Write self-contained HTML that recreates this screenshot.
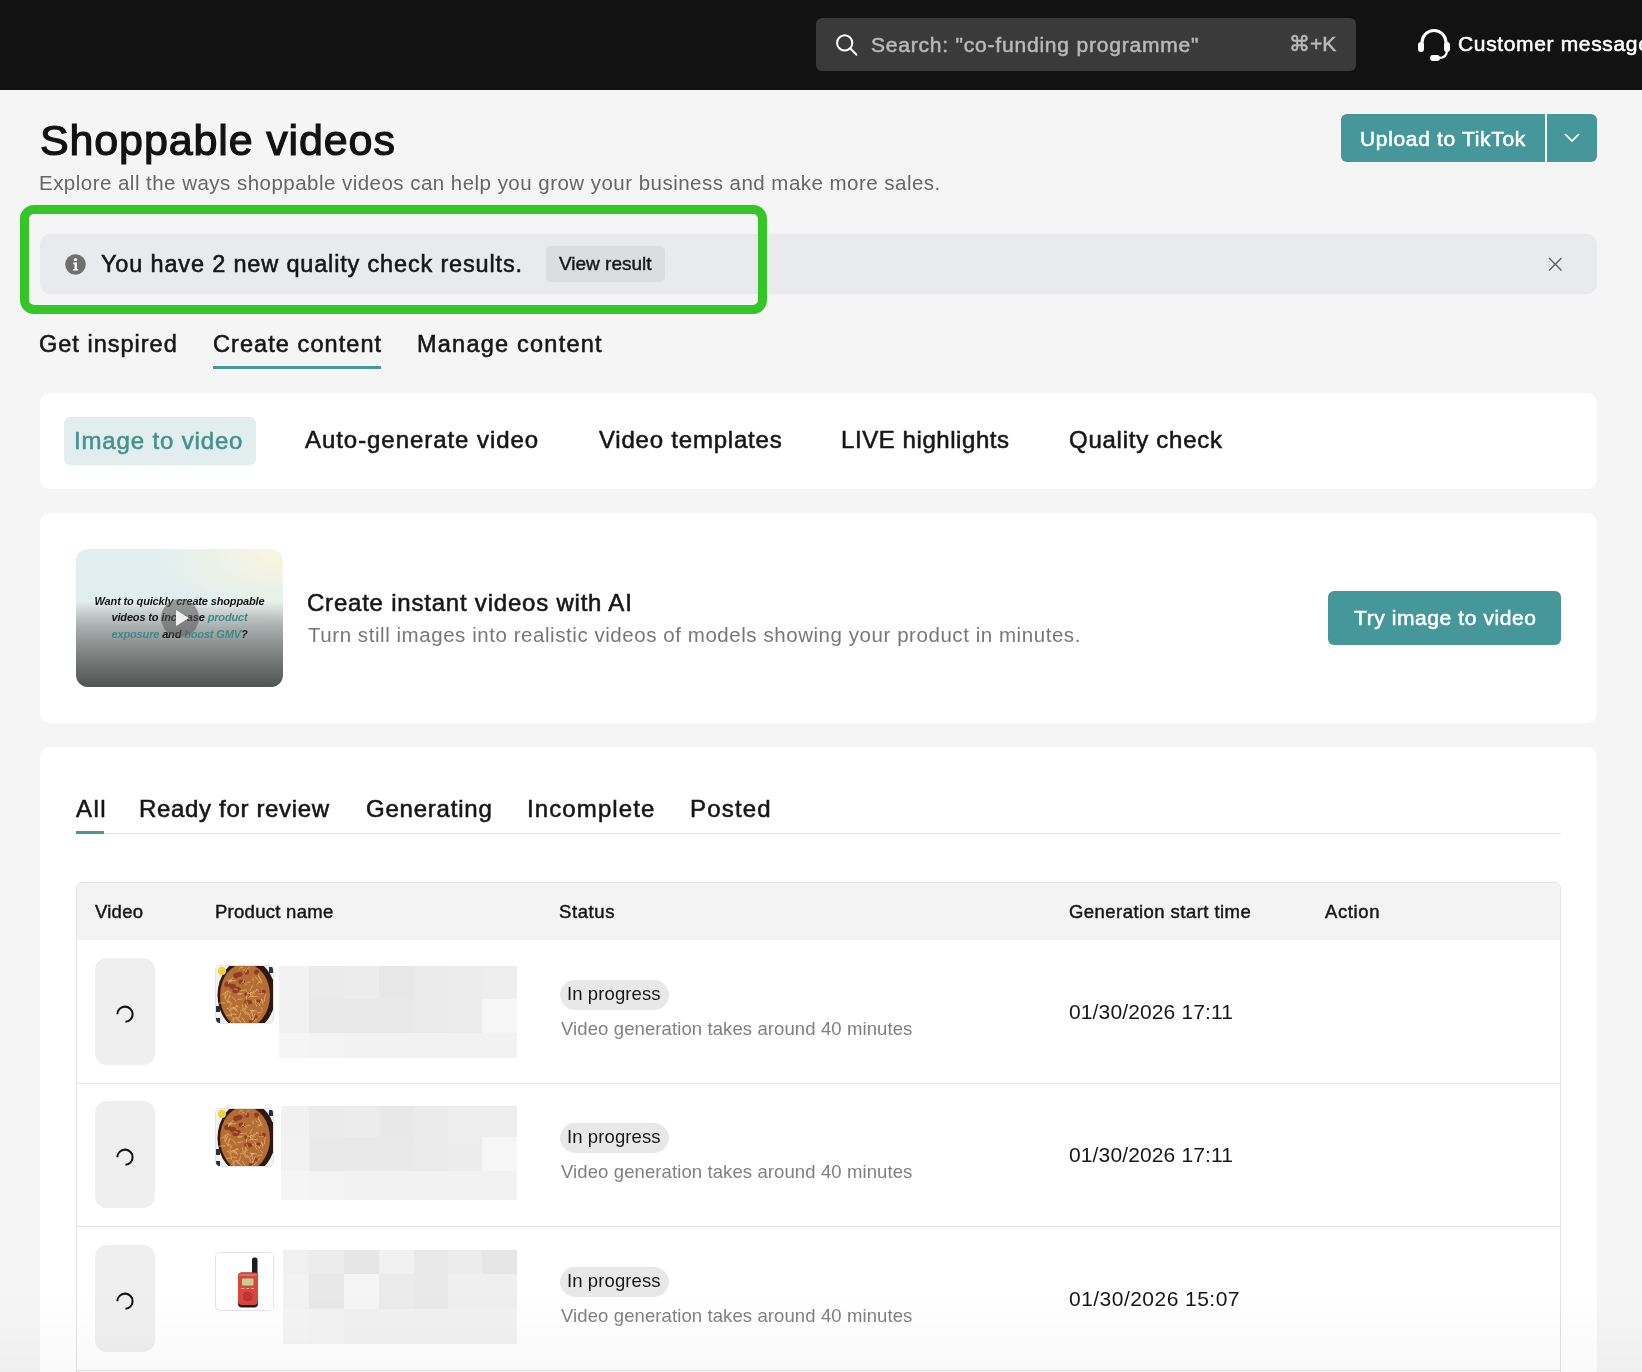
<!DOCTYPE html>
<html><head><meta charset="utf-8">
<style>
*{box-sizing:border-box;margin:0;padding:0}
html,body{width:1642px;height:1372px;overflow:hidden}
body{background:#f5f5f5;font-family:"Liberation Sans",sans-serif;color:#161616;position:relative}
.abs{position:absolute}
.t{position:absolute;white-space:nowrap;line-height:1;will-change:transform}
.card{position:absolute;background:#fff;border-radius:10px}
.teal{background:#45979a}
.spinbox{position:absolute;left:95px;width:60px;height:107px;background:#efeff0;border-radius:12px}
.pimg{position:absolute;left:215px;width:59px;height:59px;border-radius:5px;border:1px solid #e4e4e4;overflow:hidden;background:#fff}
.blk{position:absolute;display:grid;grid-template-columns:repeat(7,1fr);grid-template-rows:34px 34px 25px}
.blk i{display:block}
.chip{position:absolute;left:560px;width:109px;height:30px;border-radius:15px;background:#e8e8e8}
</style></head><body>

<div class="abs" style="left:0;top:0;width:1642px;height:90px;background:#121212"></div>
<div class="abs" style="left:816px;top:18px;width:540px;height:53px;background:#3a3a3a;border-radius:6px"></div>
<svg class="abs" style="left:830px;top:28px" width="32" height="32" viewBox="0 0 32 32"><circle cx="14.7" cy="14.9" r="7.6" fill="none" stroke="#fff" stroke-width="2"/><line x1="20.3" y1="20.5" x2="26.5" y2="26.7" stroke="#fff" stroke-width="2" stroke-linecap="round"/></svg>
<svg class="abs" style="left:1414px;top:25px" width="40" height="40" viewBox="0 0 40 40"><path d="M8 20 V17.5 A12 12 0 0 1 32 17.5 V20" fill="none" stroke="#fff" stroke-width="3.1"/><rect x="4" y="17" width="6" height="10" rx="3" fill="#fff"/><rect x="30" y="17" width="6" height="10" rx="3" fill="#fff"/><path d="M33 25 Q33 33 25 33" fill="none" stroke="#fff" stroke-width="2.2"/><rect x="16" y="30" width="10" height="6" rx="3" fill="#fff"/></svg>
<div class="abs teal" style="left:1341px;top:114px;width:256px;height:48px;border-radius:6px"></div>
<div class="abs" style="left:1545px;top:114px;width:2px;height:48px;background:#f5f5f5"></div>
<svg class="abs" style="left:1563px;top:131px" width="18" height="13" viewBox="0 0 18 13"><path d="M2 3 L9 10 L16 3" fill="none" stroke="#fff" stroke-width="1.7"/></svg>
<div class="abs" style="left:40px;top:234px;width:1557px;height:60px;background:#e9eaed;border-radius:10px"></div>
<div class="abs" style="left:20.2px;top:205px;width:746.6px;height:108.5px;border:9.5px solid #34c527;border-radius:14px"></div>
<svg class="abs" style="left:65px;top:254px" width="21" height="21" viewBox="0 0 21 21"><circle cx="10.5" cy="10.5" r="10.3" fill="#6f6f6f"/><circle cx="10.5" cy="5.6" r="1.7" fill="#fff"/><path d="M8.3 8.6 H11.9 V14.9 H13.2 V16.6 H8.1 V14.9 H9.5 V10.3 H8.3 Z" fill="#fff"/></svg>
<div class="abs" style="left:546px;top:246px;width:119px;height:36px;background:#dcdde1;border-radius:5px"></div>
<svg class="abs" style="left:1546px;top:255px" width="18" height="18" viewBox="0 0 18 18"><path d="M3 3 L15.5 15.5 M15.5 3 L3 15.5" stroke="#5c5c5c" stroke-width="1.4"/></svg>
<div class="abs" style="left:213px;top:366px;width:168px;height:3px;background:#45979a"></div>
<div class="card" style="left:40px;top:393px;width:1557px;height:96px"></div>
<div class="abs" style="left:64px;top:417px;width:192px;height:48px;background:#e2eded;border-radius:6px"></div>
<div class="card" style="left:40px;top:513px;width:1557px;height:210px"></div>
<div class="abs" style="left:76px;top:549px;width:207px;height:138px;border-radius:12px;overflow:hidden;background:radial-gradient(ellipse 60% 50% at 100% 0%,rgba(252,246,222,.95) 0%,rgba(252,246,222,0) 100%),linear-gradient(180deg,#e2eff0 0%,#e1eeee 38%,#cdd3d2 45%,#aab0af 56%,#8b908f 70%,#6b706f 85%,#505554 100%)">
<div class="t" style="left:0;top:47px;width:207px;text-align:center;font-size:11px;font-weight:bold;font-style:italic;color:#111;letter-spacing:-.15px">Want to quickly create shoppable</div>
<div class="t" style="left:0;top:63px;width:207px;text-align:center;font-size:11px;font-weight:bold;font-style:italic;color:#111;letter-spacing:-.15px">videos to increase <span style="color:#3e8a87">product</span></div>
<div class="t" style="left:0;top:80px;width:207px;text-align:center;font-size:11px;font-weight:bold;font-style:italic;color:#111;letter-spacing:-.15px"><span style="color:#3e8a87">exposure</span> and <span style="color:#3e8a87">boost GMV</span>?</div>
<div class="abs" style="left:85px;top:50px;width:38px;height:38px;border-radius:50%;background:rgba(90,90,90,.55)"></div>
<svg class="abs" style="left:96px;top:59px" width="20" height="20" viewBox="0 0 20 20"><path d="M4 2 L17 10 L4 18 Z" fill="#f0f0f0"/></svg>
</div>
<div class="abs teal" style="left:1328px;top:591px;width:233px;height:54px;border-radius:6px"></div>
<div class="card" style="left:40px;top:747px;width:1557px;height:700px"></div>
<div class="abs" style="left:76px;top:833px;width:1485px;height:1px;background:#e3e3e3"></div>
<div class="abs" style="left:76px;top:831px;width:28px;height:3px;background:#45979a"></div>
<div class="abs" style="left:76px;top:882px;width:1485px;height:600px;border:1px solid #e3e3e3;border-radius:6px"></div>
<div class="abs" style="left:77px;top:883px;width:1483px;height:57px;background:#f3f3f4;border-radius:5px 5px 0 0"></div>
<div class="abs" style="left:77px;top:1083px;width:1483px;height:1px;background:#e3e3e3"></div>
<div class="spinbox" style="top:958px"></div>
<svg class="abs" style="left:113px;top:1002px" width="24" height="24" viewBox="0 0 24 24"><path d="M4.4 12.2 A7.6 7.6 0 1 1 12.4 19.8" fill="none" stroke="#161616" stroke-width="2.1"/></svg>
<div class="pimg" style="top:965px"><svg width="58" height="58" viewBox="0 0 58 58"><rect width="58" height="58" fill="#f2f2f2"/><g fill="#1f3446"><rect x="53" y="1" width="5" height="6"/><rect x="54" y="13" width="4" height="7"/><rect x="0" y="40" width="4" height="6"/><rect x="0" y="52" width="4" height="6"/></g><ellipse cx="30.5" cy="29" rx="29" ry="36" fill="#2e190c"/><ellipse cx="29" cy="29.5" rx="25" ry="32" fill="#b56d36"/><g fill="#8a3420" opacity=".85"><ellipse cx="32.9" cy="36.2" rx="3.3" ry="2.2"/><ellipse cx="19.4" cy="25.0" rx="3.1" ry="2.1"/><ellipse cx="30.7" cy="5.9" rx="2.3" ry="2.7"/><ellipse cx="31.1" cy="36.1" rx="2.7" ry="2.5"/><ellipse cx="16.8" cy="20.6" rx="3.2" ry="2.8"/><ellipse cx="42.0" cy="35.7" rx="3.3" ry="2.2"/><ellipse cx="25.8" cy="15.9" rx="3.3" ry="2.4"/><ellipse cx="35.5" cy="55.4" rx="2.7" ry="2.5"/><ellipse cx="39.3" cy="51.7" rx="2.8" ry="2.4"/><ellipse cx="31.7" cy="28.2" rx="3.2" ry="2.3"/><ellipse cx="40.6" cy="6.1" rx="2.5" ry="2.7"/><ellipse cx="11.4" cy="18.4" rx="3.2" ry="2.7"/><ellipse cx="19.9" cy="9.7" rx="2.7" ry="2.7"/><ellipse cx="23.4" cy="8.3" rx="3.2" ry="2.6"/><ellipse cx="46.4" cy="25.7" rx="3.3" ry="2.3"/><ellipse cx="21.3" cy="23.6" rx="3.5" ry="2.9"/></g><path d="M26.8 32.5Q24.3 33.4 21.6 33.7M14.5 29.7Q11.5 32.1 11.7 36.1M36.1 35.7Q37.5 34.7 38.8 37.2M14.7 14.0Q17.2 15.7 20.0 14.5M29.9 37.1Q29.7 39.4 29.9 43.4M44.6 41.1Q44.9 41.1 46.9 44.5M41.2 23.2Q40.9 25.8 36.9 25.5M47.9 27.3Q43.7 27.9 42.9 27.6M41.8 15.6Q45.9 17.3 46.3 16.9M11.4 14.3Q14.2 13.5 14.6 15.3M31.7 26.0Q33.0 28.4 37.2 29.7M11.4 24.4Q14.9 27.0 14.8 27.1M20.0 51.3Q23.4 53.4 23.9 54.4M15.8 15.0Q13.2 14.8 12.3 18.0M10.1 33.8Q11.8 35.7 14.5 38.0M50.1 28.1Q48.0 30.2 48.4 35.2M17.5 11.0Q13.6 15.6 12.2 16.6M46.6 35.0Q45.2 38.6 47.4 38.4M17.0 40.9Q19.8 42.6 21.9 46.0M14.1 41.8Q16.3 43.6 18.1 42.7M34.3 16.3Q30.4 15.8 30.4 17.3M26.5 3.5Q28.9 3.3 30.6 6.1M22.7 51.7Q20.3 52.2 16.4 52.1M28.2 42.4Q28.6 45.9 32.5 49.1M39.9 52.2Q38.9 56.3 35.5 57.0M22.2 39.7Q18.4 42.0 15.2 42.0M45.7 33.2Q45.1 35.9 43.8 37.8M9.7 37.1Q6.9 36.7 2.3 37.2M39.8 33.7Q38.8 38.2 41.1 40.8M28.1 13.4Q27.0 17.3 24.9 17.8M19.8 39.3Q23.0 41.1 22.9 41.6M26.3 51.7Q26.8 54.2 29.6 57.1M46.5 22.3Q44.4 24.5 45.3 26.7M44.5 49.2Q41.2 51.0 39.7 55.3M26.7 16.0Q29.2 17.5 30.7 19.1M20.5 48.7Q16.2 46.9 15.3 49.0M38.6 33.1Q38.6 34.5 42.5 38.8M26.9 1.4Q23.7 0.7 23.3 3.6M34.9 25.9Q34.9 30.6 32.5 31.7M37.5 11.6Q35.7 13.4 37.8 15.4M38.9 10.4Q41.2 12.3 42.0 14.0M34.3 43.9Q37.0 45.5 36.5 50.4M12.0 26.3Q10.0 30.1 9.1 33.3M46.4 46.2Q44.4 45.5 41.2 47.1M39.2 47.5Q36.6 52.0 36.4 53.4M30.7 45.9Q34.1 48.4 34.7 52.2M9.8 25.6Q9.2 27.1 8.7 32.3M42.8 10.0Q43.1 11.6 46.2 16.1M29.8 42.0Q28.7 43.5 24.1 45.1M16.2 30.5Q18.8 33.3 20.3 35.8M44.8 32.5Q47.6 36.1 47.5 36.6M15.6 49.3Q13.1 48.4 10.0 49.9M30.7 29.2Q32.0 30.7 29.6 32.2M24.4 46.5Q24.7 47.4 23.4 51.8M30.8 24.0Q26.1 24.4 23.2 25.0M11.8 25.2Q8.6 26.5 5.6 29.3M14.8 35.8Q14.2 34.4 11.3 36.7M14.9 13.2Q13.1 15.6 12.4 17.0M10.8 42.4Q12.4 42.2 16.0 44.5M30.4 25.3Q31.5 26.3 32.3 30.0M15.4 36.6Q15.6 39.6 13.0 41.7M45.4 13.5Q44.6 15.3 40.6 18.6M20.5 53.5Q25.1 54.6 26.7 58.6M17.0 42.1Q19.5 43.1 19.4 44.7M42.3 7.3Q41.4 9.2 44.3 13.4M37.4 52.9Q35.6 54.1 33.8 53.2M29.1 39.8Q28.9 38.9 31.9 41.6M31.4 29.9Q29.7 30.5 30.6 33.5M27.3 44.4Q28.7 46.4 30.0 48.9M33.6 0.8Q30.2 3.5 29.4 6.6M40.0 23.5Q41.6 22.7 43.1 25.7M38.4 49.9Q37.8 52.2 36.4 54.5M17.9 52.9Q16.7 55.0 13.1 57.8M38.0 44.5Q37.0 44.5 34.2 47.9M21.7 27.2Q24.7 27.8 26.5 27.4M36.6 19.6Q35.4 21.7 33.8 24.7M38.3 44.2Q37.2 45.2 35.1 44.4M17.8 23.3Q19.3 22.0 21.7 23.9M17.5 52.5Q19.0 55.5 16.7 58.0M33.5 44.0Q35.9 44.5 41.1 45.1M13.8 28.7Q15.0 30.0 12.7 31.8M30.2 34.7Q31.8 36.9 32.0 38.7M19.0 41.6Q18.9 41.0 20.9 44.0M13.2 43.8Q15.5 45.5 15.7 50.8M25.8 27.7Q23.7 29.6 21.6 28.1M39.2 27.2Q36.1 25.9 32.2 27.6M34.7 26.4Q36.1 25.9 37.3 28.4M26.4 38.7Q27.0 40.6 27.0 43.0M41.8 30.8Q38.8 29.8 34.0 30.8M42.1 36.2Q43.8 38.5 43.9 40.2" fill="none" stroke="#e6b56e" stroke-width=".9" opacity=".85"/><circle cx="6" cy="5" r="4" fill="#efd236"/></svg></div>
<div class="abs" style="left:279px;top:965.5px;width:30.0px;height:33.2px;background:rgb(242,242,243)"></div>
<div class="abs" style="left:309px;top:965.5px;width:35.0px;height:33.2px;background:rgb(235,235,236)"></div>
<div class="abs" style="left:344px;top:965.5px;width:34.5px;height:33.2px;background:rgb(236,236,237)"></div>
<div class="abs" style="left:378.5px;top:965.5px;width:35.0px;height:33.2px;background:rgb(231,231,232)"></div>
<div class="abs" style="left:413.5px;top:965.5px;width:34.5px;height:33.2px;background:rgb(234,234,235)"></div>
<div class="abs" style="left:448px;top:965.5px;width:34.0px;height:33.2px;background:rgb(236,236,237)"></div>
<div class="abs" style="left:482px;top:965.5px;width:35.0px;height:33.2px;background:rgb(238,238,239)"></div>
<div class="abs" style="left:279px;top:998.7px;width:30.0px;height:34.1px;background:rgb(241,241,242)"></div>
<div class="abs" style="left:309px;top:998.7px;width:35.0px;height:34.1px;background:rgb(233,233,234)"></div>
<div class="abs" style="left:344px;top:998.7px;width:34.5px;height:34.1px;background:rgb(233,233,234)"></div>
<div class="abs" style="left:378.5px;top:998.7px;width:35.0px;height:34.1px;background:rgb(233,233,234)"></div>
<div class="abs" style="left:413.5px;top:998.7px;width:34.5px;height:34.1px;background:rgb(234,234,235)"></div>
<div class="abs" style="left:448px;top:998.7px;width:34.0px;height:34.1px;background:rgb(236,236,237)"></div>
<div class="abs" style="left:482px;top:998.7px;width:35.0px;height:34.1px;background:rgb(246,246,247)"></div>
<div class="abs" style="left:279px;top:1032.8px;width:30.0px;height:24.9px;background:rgb(245,245,246)"></div>
<div class="abs" style="left:309px;top:1032.8px;width:35.0px;height:24.9px;background:rgb(243,243,244)"></div>
<div class="abs" style="left:344px;top:1032.8px;width:34.5px;height:24.9px;background:rgb(242,242,243)"></div>
<div class="abs" style="left:378.5px;top:1032.8px;width:35.0px;height:24.9px;background:rgb(242,242,243)"></div>
<div class="abs" style="left:413.5px;top:1032.8px;width:34.5px;height:24.9px;background:rgb(242,242,243)"></div>
<div class="abs" style="left:448px;top:1032.8px;width:34.0px;height:24.9px;background:rgb(242,242,243)"></div>
<div class="abs" style="left:482px;top:1032.8px;width:35.0px;height:24.9px;background:rgb(242,242,243)"></div>
<div class="chip" style="top:980px"></div>
<div class="abs" style="left:77px;top:1226px;width:1483px;height:1px;background:#e3e3e3"></div>
<div class="spinbox" style="top:1101px"></div>
<svg class="abs" style="left:113px;top:1145px" width="24" height="24" viewBox="0 0 24 24"><path d="M4.4 12.2 A7.6 7.6 0 1 1 12.4 19.8" fill="none" stroke="#161616" stroke-width="2.1"/></svg>
<div class="pimg" style="top:1108px"><svg width="58" height="58" viewBox="0 0 58 58"><rect width="58" height="58" fill="#f2f2f2"/><g fill="#1f3446"><rect x="53" y="1" width="5" height="6"/><rect x="54" y="13" width="4" height="7"/><rect x="0" y="40" width="4" height="6"/><rect x="0" y="52" width="4" height="6"/></g><ellipse cx="30.5" cy="29" rx="29" ry="36" fill="#2e190c"/><ellipse cx="29" cy="29.5" rx="25" ry="32" fill="#b56d36"/><g fill="#8a3420" opacity=".85"><ellipse cx="32.9" cy="36.2" rx="3.3" ry="2.2"/><ellipse cx="19.4" cy="25.0" rx="3.1" ry="2.1"/><ellipse cx="30.7" cy="5.9" rx="2.3" ry="2.7"/><ellipse cx="31.1" cy="36.1" rx="2.7" ry="2.5"/><ellipse cx="16.8" cy="20.6" rx="3.2" ry="2.8"/><ellipse cx="42.0" cy="35.7" rx="3.3" ry="2.2"/><ellipse cx="25.8" cy="15.9" rx="3.3" ry="2.4"/><ellipse cx="35.5" cy="55.4" rx="2.7" ry="2.5"/><ellipse cx="39.3" cy="51.7" rx="2.8" ry="2.4"/><ellipse cx="31.7" cy="28.2" rx="3.2" ry="2.3"/><ellipse cx="40.6" cy="6.1" rx="2.5" ry="2.7"/><ellipse cx="11.4" cy="18.4" rx="3.2" ry="2.7"/><ellipse cx="19.9" cy="9.7" rx="2.7" ry="2.7"/><ellipse cx="23.4" cy="8.3" rx="3.2" ry="2.6"/><ellipse cx="46.4" cy="25.7" rx="3.3" ry="2.3"/><ellipse cx="21.3" cy="23.6" rx="3.5" ry="2.9"/></g><path d="M26.8 32.5Q24.3 33.4 21.6 33.7M14.5 29.7Q11.5 32.1 11.7 36.1M36.1 35.7Q37.5 34.7 38.8 37.2M14.7 14.0Q17.2 15.7 20.0 14.5M29.9 37.1Q29.7 39.4 29.9 43.4M44.6 41.1Q44.9 41.1 46.9 44.5M41.2 23.2Q40.9 25.8 36.9 25.5M47.9 27.3Q43.7 27.9 42.9 27.6M41.8 15.6Q45.9 17.3 46.3 16.9M11.4 14.3Q14.2 13.5 14.6 15.3M31.7 26.0Q33.0 28.4 37.2 29.7M11.4 24.4Q14.9 27.0 14.8 27.1M20.0 51.3Q23.4 53.4 23.9 54.4M15.8 15.0Q13.2 14.8 12.3 18.0M10.1 33.8Q11.8 35.7 14.5 38.0M50.1 28.1Q48.0 30.2 48.4 35.2M17.5 11.0Q13.6 15.6 12.2 16.6M46.6 35.0Q45.2 38.6 47.4 38.4M17.0 40.9Q19.8 42.6 21.9 46.0M14.1 41.8Q16.3 43.6 18.1 42.7M34.3 16.3Q30.4 15.8 30.4 17.3M26.5 3.5Q28.9 3.3 30.6 6.1M22.7 51.7Q20.3 52.2 16.4 52.1M28.2 42.4Q28.6 45.9 32.5 49.1M39.9 52.2Q38.9 56.3 35.5 57.0M22.2 39.7Q18.4 42.0 15.2 42.0M45.7 33.2Q45.1 35.9 43.8 37.8M9.7 37.1Q6.9 36.7 2.3 37.2M39.8 33.7Q38.8 38.2 41.1 40.8M28.1 13.4Q27.0 17.3 24.9 17.8M19.8 39.3Q23.0 41.1 22.9 41.6M26.3 51.7Q26.8 54.2 29.6 57.1M46.5 22.3Q44.4 24.5 45.3 26.7M44.5 49.2Q41.2 51.0 39.7 55.3M26.7 16.0Q29.2 17.5 30.7 19.1M20.5 48.7Q16.2 46.9 15.3 49.0M38.6 33.1Q38.6 34.5 42.5 38.8M26.9 1.4Q23.7 0.7 23.3 3.6M34.9 25.9Q34.9 30.6 32.5 31.7M37.5 11.6Q35.7 13.4 37.8 15.4M38.9 10.4Q41.2 12.3 42.0 14.0M34.3 43.9Q37.0 45.5 36.5 50.4M12.0 26.3Q10.0 30.1 9.1 33.3M46.4 46.2Q44.4 45.5 41.2 47.1M39.2 47.5Q36.6 52.0 36.4 53.4M30.7 45.9Q34.1 48.4 34.7 52.2M9.8 25.6Q9.2 27.1 8.7 32.3M42.8 10.0Q43.1 11.6 46.2 16.1M29.8 42.0Q28.7 43.5 24.1 45.1M16.2 30.5Q18.8 33.3 20.3 35.8M44.8 32.5Q47.6 36.1 47.5 36.6M15.6 49.3Q13.1 48.4 10.0 49.9M30.7 29.2Q32.0 30.7 29.6 32.2M24.4 46.5Q24.7 47.4 23.4 51.8M30.8 24.0Q26.1 24.4 23.2 25.0M11.8 25.2Q8.6 26.5 5.6 29.3M14.8 35.8Q14.2 34.4 11.3 36.7M14.9 13.2Q13.1 15.6 12.4 17.0M10.8 42.4Q12.4 42.2 16.0 44.5M30.4 25.3Q31.5 26.3 32.3 30.0M15.4 36.6Q15.6 39.6 13.0 41.7M45.4 13.5Q44.6 15.3 40.6 18.6M20.5 53.5Q25.1 54.6 26.7 58.6M17.0 42.1Q19.5 43.1 19.4 44.7M42.3 7.3Q41.4 9.2 44.3 13.4M37.4 52.9Q35.6 54.1 33.8 53.2M29.1 39.8Q28.9 38.9 31.9 41.6M31.4 29.9Q29.7 30.5 30.6 33.5M27.3 44.4Q28.7 46.4 30.0 48.9M33.6 0.8Q30.2 3.5 29.4 6.6M40.0 23.5Q41.6 22.7 43.1 25.7M38.4 49.9Q37.8 52.2 36.4 54.5M17.9 52.9Q16.7 55.0 13.1 57.8M38.0 44.5Q37.0 44.5 34.2 47.9M21.7 27.2Q24.7 27.8 26.5 27.4M36.6 19.6Q35.4 21.7 33.8 24.7M38.3 44.2Q37.2 45.2 35.1 44.4M17.8 23.3Q19.3 22.0 21.7 23.9M17.5 52.5Q19.0 55.5 16.7 58.0M33.5 44.0Q35.9 44.5 41.1 45.1M13.8 28.7Q15.0 30.0 12.7 31.8M30.2 34.7Q31.8 36.9 32.0 38.7M19.0 41.6Q18.9 41.0 20.9 44.0M13.2 43.8Q15.5 45.5 15.7 50.8M25.8 27.7Q23.7 29.6 21.6 28.1M39.2 27.2Q36.1 25.9 32.2 27.6M34.7 26.4Q36.1 25.9 37.3 28.4M26.4 38.7Q27.0 40.6 27.0 43.0M41.8 30.8Q38.8 29.8 34.0 30.8M42.1 36.2Q43.8 38.5 43.9 40.2" fill="none" stroke="#e6b56e" stroke-width=".9" opacity=".85"/><circle cx="6" cy="5" r="4" fill="#efd236"/></svg></div>
<div class="abs" style="left:281px;top:1106px;width:28.0px;height:31.2px;background:rgb(241,241,242)"></div>
<div class="abs" style="left:309px;top:1106px;width:35.0px;height:31.2px;background:rgb(235,235,236)"></div>
<div class="abs" style="left:344px;top:1106px;width:34.5px;height:31.2px;background:rgb(236,236,237)"></div>
<div class="abs" style="left:378.5px;top:1106px;width:35.0px;height:31.2px;background:rgb(232,232,233)"></div>
<div class="abs" style="left:413.5px;top:1106px;width:34.5px;height:31.2px;background:rgb(235,235,236)"></div>
<div class="abs" style="left:448px;top:1106px;width:34.0px;height:31.2px;background:rgb(237,237,238)"></div>
<div class="abs" style="left:482px;top:1106px;width:35.0px;height:31.2px;background:rgb(238,238,239)"></div>
<div class="abs" style="left:281px;top:1137.2px;width:28.0px;height:34.2px;background:rgb(242,242,243)"></div>
<div class="abs" style="left:309px;top:1137.2px;width:35.0px;height:34.2px;background:rgb(233,233,234)"></div>
<div class="abs" style="left:344px;top:1137.2px;width:34.5px;height:34.2px;background:rgb(233,233,234)"></div>
<div class="abs" style="left:378.5px;top:1137.2px;width:35.0px;height:34.2px;background:rgb(233,233,234)"></div>
<div class="abs" style="left:413.5px;top:1137.2px;width:34.5px;height:34.2px;background:rgb(234,234,235)"></div>
<div class="abs" style="left:448px;top:1137.2px;width:34.0px;height:34.2px;background:rgb(236,236,237)"></div>
<div class="abs" style="left:482px;top:1137.2px;width:35.0px;height:34.2px;background:rgb(246,246,247)"></div>
<div class="abs" style="left:281px;top:1171.4px;width:28.0px;height:28.3px;background:rgb(245,245,246)"></div>
<div class="abs" style="left:309px;top:1171.4px;width:35.0px;height:28.3px;background:rgb(243,243,244)"></div>
<div class="abs" style="left:344px;top:1171.4px;width:34.5px;height:28.3px;background:rgb(242,242,243)"></div>
<div class="abs" style="left:378.5px;top:1171.4px;width:35.0px;height:28.3px;background:rgb(242,242,243)"></div>
<div class="abs" style="left:413.5px;top:1171.4px;width:34.5px;height:28.3px;background:rgb(242,242,243)"></div>
<div class="abs" style="left:448px;top:1171.4px;width:34.0px;height:28.3px;background:rgb(242,242,243)"></div>
<div class="abs" style="left:482px;top:1171.4px;width:35.0px;height:28.3px;background:rgb(242,242,243)"></div>
<div class="chip" style="top:1123px"></div>
<div class="abs" style="left:77px;top:1370px;width:1483px;height:1px;background:#e3e3e3"></div>
<div class="spinbox" style="top:1245px"></div>
<svg class="abs" style="left:113px;top:1289px" width="24" height="24" viewBox="0 0 24 24"><path d="M4.4 12.2 A7.6 7.6 0 1 1 12.4 19.8" fill="none" stroke="#161616" stroke-width="2.1"/></svg>
<div class="pimg" style="top:1252px"><svg width="58" height="58" viewBox="0 0 58 58"><rect width="58" height="58" fill="#fff"/><rect x="36" y="4.5" width="5.5" height="20" rx="2.2" fill="#1d1d1d"/><rect x="22" y="19.5" width="20" height="35" rx="4" fill="#1d1d1d"/><rect x="22" y="19.5" width="20" height="32.5" rx="4" fill="#d8463f"/><rect x="23" y="21" width="18" height="2" fill="#e46a62"/><rect x="26" y="25.5" width="11.5" height="7" rx="1" fill="#c3d18a"/><g fill="#f1c4bf"><rect x="25.5" y="35" width="2.5" height="1"/><rect x="30.5" y="35" width="2.5" height="1"/><rect x="35.5" y="35" width="2.5" height="1"/></g><circle cx="31.8" cy="43.5" r="5" fill="#bd3530"/></svg></div>
<div class="abs" style="left:283px;top:1250px;width:26.0px;height:24.0px;background:rgb(240,240,241)"></div>
<div class="abs" style="left:309px;top:1250px;width:35.0px;height:24.0px;background:rgb(236,236,237)"></div>
<div class="abs" style="left:344px;top:1250px;width:34.5px;height:24.0px;background:rgb(230,230,231)"></div>
<div class="abs" style="left:378.5px;top:1250px;width:35.0px;height:24.0px;background:rgb(241,241,242)"></div>
<div class="abs" style="left:413.5px;top:1250px;width:34.5px;height:24.0px;background:rgb(233,233,234)"></div>
<div class="abs" style="left:448px;top:1250px;width:34.0px;height:24.0px;background:rgb(236,236,237)"></div>
<div class="abs" style="left:482px;top:1250px;width:35.0px;height:24.0px;background:rgb(230,230,231)"></div>
<div class="abs" style="left:283px;top:1274px;width:26.0px;height:35.4px;background:rgb(242,242,243)"></div>
<div class="abs" style="left:309px;top:1274px;width:35.0px;height:35.4px;background:rgb(232,232,233)"></div>
<div class="abs" style="left:344px;top:1274px;width:34.5px;height:35.4px;background:rgb(245,245,246)"></div>
<div class="abs" style="left:378.5px;top:1274px;width:35.0px;height:35.4px;background:rgb(235,235,236)"></div>
<div class="abs" style="left:413.5px;top:1274px;width:34.5px;height:35.4px;background:rgb(233,233,234)"></div>
<div class="abs" style="left:448px;top:1274px;width:34.0px;height:35.4px;background:rgb(239,239,240)"></div>
<div class="abs" style="left:482px;top:1274px;width:35.0px;height:35.4px;background:rgb(239,239,240)"></div>
<div class="abs" style="left:283px;top:1309.4px;width:26.0px;height:34.8px;background:rgb(244,244,245)"></div>
<div class="abs" style="left:309px;top:1309.4px;width:35.0px;height:34.8px;background:rgb(243,243,244)"></div>
<div class="abs" style="left:344px;top:1309.4px;width:34.5px;height:34.8px;background:rgb(241,241,242)"></div>
<div class="abs" style="left:378.5px;top:1309.4px;width:35.0px;height:34.8px;background:rgb(241,241,242)"></div>
<div class="abs" style="left:413.5px;top:1309.4px;width:34.5px;height:34.8px;background:rgb(241,241,242)"></div>
<div class="abs" style="left:448px;top:1309.4px;width:34.0px;height:34.8px;background:rgb(241,241,242)"></div>
<div class="abs" style="left:482px;top:1309.4px;width:35.0px;height:34.8px;background:rgb(241,241,242)"></div>
<div class="chip" style="top:1267px"></div>
<div class="abs" style="left:0;top:1290px;width:1642px;height:82px;background:linear-gradient(180deg,rgba(0,0,0,0),rgba(0,0,0,.025))"></div>
<div class="t" id="search" style="left:871.00px;top:34.15px;font-size:21px;color:#b9b9b9;letter-spacing:0.793px;-webkit-text-stroke:0.55px #b9b9b9">Search: "co-funding programme"</div>
<div class="t" id="cmdk" style="left:1289.00px;top:33.25px;font-size:21px;color:#b9b9b9;letter-spacing:0.000px;-webkit-text-stroke:0.55px #b9b9b9">⌘+K</div>
<div class="t" id="cust" style="left:1458.00px;top:33.25px;font-size:21px;color:#ffffff;letter-spacing:0.650px;-webkit-text-stroke:0.55px #ffffff">Customer messages</div>
<div class="t" id="title" style="left:40.00px;top:118.85px;font-size:43px;color:#121212;letter-spacing:0.867px;-webkit-text-stroke:1.2px #121212">Shoppable videos</div>
<div class="t" id="sub" style="left:39.00px;top:173.28px;font-size:20.5px;color:#666666;letter-spacing:0.472px">Explore all the ways shoppable videos can help you grow your business and make more sales.</div>
<div class="t" id="upload" style="left:1360.40px;top:127.95px;font-size:21px;color:#ffffff;letter-spacing:0.667px;-webkit-text-stroke:0.55px #ffffff">Upload to TikTok</div>
<div class="t" id="banner" style="left:100.60px;top:252.53px;font-size:23.5px;color:#161616;letter-spacing:0.833px;-webkit-text-stroke:0.55px #161616">You have 2 new quality check results.</div>
<div class="t" id="view" style="left:558.80px;top:254.45px;font-size:19px;color:#161616;letter-spacing:0.000px;-webkit-text-stroke:0.45px #161616">View result</div>
<div class="t" id="tab1" style="left:39.40px;top:332.92px;font-size:23.5px;color:#161616;letter-spacing:1.000px;-webkit-text-stroke:0.55px #161616">Get inspired</div>
<div class="t" id="tab2" style="left:213.00px;top:332.92px;font-size:23.5px;color:#161616;letter-spacing:1.077px;-webkit-text-stroke:0.55px #161616">Create content</div>
<div class="t" id="tab3" style="left:416.70px;top:332.92px;font-size:23.5px;color:#161616;letter-spacing:1.231px;-webkit-text-stroke:0.55px #161616">Manage content</div>
<div class="t" id="st1" style="left:74.40px;top:428.60px;font-size:24px;color:#45918f;letter-spacing:0.846px;-webkit-text-stroke:0.55px #45918f">Image to video</div>
<div class="t" id="st2" style="left:304.70px;top:428.10px;font-size:24px;color:#161616;letter-spacing:0.944px;-webkit-text-stroke:0.55px #161616">Auto-generate video</div>
<div class="t" id="st3" style="left:599.30px;top:428.10px;font-size:24px;color:#161616;letter-spacing:0.786px;-webkit-text-stroke:0.55px #161616">Video templates</div>
<div class="t" id="st4" style="left:841.30px;top:428.10px;font-size:24px;color:#161616;letter-spacing:0.571px;-webkit-text-stroke:0.55px #161616">LIVE highlights</div>
<div class="t" id="st5" style="left:1069.40px;top:428.10px;font-size:24px;color:#161616;letter-spacing:0.750px;-webkit-text-stroke:0.55px #161616">Quality check</div>
<div class="t" id="promo" style="left:306.50px;top:591.20px;font-size:24px;color:#161616;letter-spacing:0.786px;-webkit-text-stroke:0.55px #161616">Create instant videos with AI</div>
<div class="t" id="promosub" style="left:307.50px;top:625.08px;font-size:20.5px;color:#777777;letter-spacing:0.556px">Turn still images into realistic videos of models showing your product in minutes.</div>
<div class="t" id="try" style="left:1353.80px;top:607.25px;font-size:21px;color:#ffffff;letter-spacing:0.588px;-webkit-text-stroke:0.55px #ffffff">Try image to video</div>
<div class="t" id="tt1" style="left:76.00px;top:796.60px;font-size:24px;color:#161616;letter-spacing:1.500px;-webkit-text-stroke:0.55px #161616">All</div>
<div class="t" id="tt2" style="left:139.00px;top:796.60px;font-size:24px;color:#161616;letter-spacing:0.667px;-webkit-text-stroke:0.55px #161616">Ready for review</div>
<div class="t" id="tt3" style="left:366.30px;top:796.60px;font-size:24px;color:#161616;letter-spacing:0.778px;-webkit-text-stroke:0.55px #161616">Generating</div>
<div class="t" id="tt4" style="left:526.80px;top:796.60px;font-size:24px;color:#161616;letter-spacing:1.111px;-webkit-text-stroke:0.55px #161616">Incomplete</div>
<div class="t" id="tt5" style="left:689.70px;top:796.60px;font-size:24px;color:#161616;letter-spacing:1.200px;-webkit-text-stroke:0.55px #161616">Posted</div>
<div class="t" id="h1" style="left:95.00px;top:902.77px;font-size:18.5px;color:#161616;letter-spacing:0.250px;-webkit-text-stroke:0.45px #161616">Video</div>
<div class="t" id="h2" style="left:214.50px;top:902.77px;font-size:18.5px;color:#161616;letter-spacing:0.273px;-webkit-text-stroke:0.45px #161616">Product name</div>
<div class="t" id="h3" style="left:559.00px;top:902.77px;font-size:18.5px;color:#161616;letter-spacing:0.600px;-webkit-text-stroke:0.45px #161616">Status</div>
<div class="t" id="h4" style="left:1069.00px;top:902.77px;font-size:18.5px;color:#161616;letter-spacing:0.450px;-webkit-text-stroke:0.45px #161616">Generation start time</div>
<div class="t" id="h5" style="left:1325.00px;top:902.77px;font-size:18.5px;color:#161616;letter-spacing:0.600px;-webkit-text-stroke:0.45px #161616">Action</div>
<div class="t" id="ip0" style="left:567.00px;top:985.27px;font-size:18.5px;color:#161616;letter-spacing:0.100px">In progress</div>
<div class="t" id="vg0" style="left:560.50px;top:1020.27px;font-size:18.5px;color:#808080;letter-spacing:0.103px">Video generation takes around 40 minutes</div>
<div class="t" id="dt0" style="left:1069.00px;top:1001.15px;font-size:21px;color:#161616;letter-spacing:0.133px">01/30/2026 17:11</div>
<div class="t" id="ip1" style="left:567.00px;top:1128.28px;font-size:18.5px;color:#161616;letter-spacing:0.100px">In progress</div>
<div class="t" id="vg1" style="left:560.50px;top:1163.28px;font-size:18.5px;color:#808080;letter-spacing:0.103px">Video generation takes around 40 minutes</div>
<div class="t" id="dt1" style="left:1069.00px;top:1144.15px;font-size:21px;color:#161616;letter-spacing:0.133px">01/30/2026 17:11</div>
<div class="t" id="ip2" style="left:567.00px;top:1272.28px;font-size:18.5px;color:#161616;letter-spacing:0.100px">In progress</div>
<div class="t" id="vg2" style="left:560.50px;top:1307.28px;font-size:18.5px;color:#808080;letter-spacing:0.103px">Video generation takes around 40 minutes</div>
<div class="t" id="dt2" style="left:1069.00px;top:1288.15px;font-size:21px;color:#161616;letter-spacing:0.467px">01/30/2026 15:07</div>
</body></html>
